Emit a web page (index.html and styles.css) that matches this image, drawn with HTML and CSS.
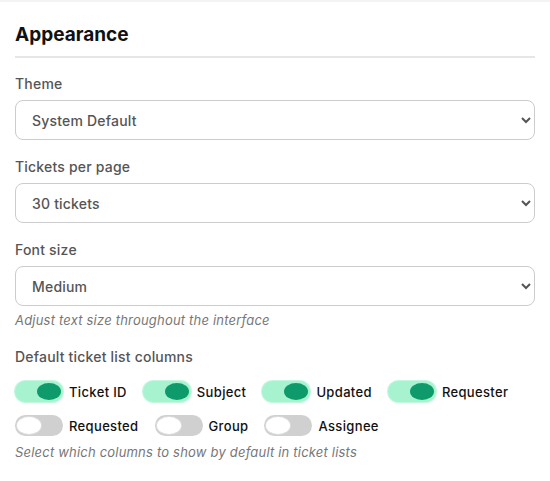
FILE: index.html
```html
<!DOCTYPE html>
<html lang="en">
<head>
    <meta charset="UTF-8">
    <meta name="viewport" content="width=device-width, initial-scale=1.0">
    <title>Appearance</title>
    <link rel="stylesheet" href="styles.css">
</head>
<body>
    <div class="section">
        <h2 class="section-title">Appearance</h2>

        <div class="field">
            <label for="theme">Theme</label>
            <select id="theme">
                <option>System Default</option>
                <option>Light</option>
                <option>Dark</option>
            </select>
        </div>

        <div class="field">
            <label for="perPage">Tickets per page</label>
            <select id="perPage">
                <option>10 tickets</option>
                <option>20 tickets</option>
                <option selected>30 tickets</option>
                <option>50 tickets</option>
            </select>
        </div>

        <div class="field">
            <label for="fontSize">Font size</label>
            <select id="fontSize">
                <option>Small</option>
                <option selected>Medium</option>
                <option>Large</option>
            </select>
            <p class="hint">Adjust text size throughout the interface</p>
        </div>

        <div class="field">
            <label>Default ticket list columns</label>
            <div class="toggles">
                <div class="toggle-item"><span class="toggle on"><span class="knob"></span></span>Ticket ID</div>
                <div class="toggle-item"><span class="toggle on"><span class="knob"></span></span>Subject</div>
                <div class="toggle-item"><span class="toggle on"><span class="knob"></span></span>Updated</div>
                <div class="toggle-item"><span class="toggle on"><span class="knob"></span></span>Requester</div>
                <div class="toggle-item"><span class="toggle"><span class="knob"></span></span>Requested</div>
                <div class="toggle-item"><span class="toggle"><span class="knob"></span></span>Group</div>
                <div class="toggle-item"><span class="toggle"><span class="knob"></span></span>Assignee</div>
            </div>
            <p class="hint hint-cols">Select which columns to show by default in ticket lists</p>
        </div>
    </div>
</body>
</html>
```

FILE: styles.css
```css
* {
    margin: 0;
    padding: 0;
    box-sizing: border-box;
}
body {
    background-color: #fff;
    font-family: Inter, "Open Sans", sans-serif;
    color: #111;
}
.section {
    border-top: 2px solid #f3f3f3;
    padding: 19px 15px 0 15px;
}
.section-title {
    font-size: 19px;
    font-weight: 700;
    line-height: 27px;
    padding-bottom: 8px;
    border-bottom: 2px solid #e6e6e6;
    margin-bottom: 15px;
}
.field {
    margin-bottom: 16px;
}
.field label {
    display: block;
    font-size: 14px;
    font-weight: 500;
    line-height: 21px;
    letter-spacing: 0.2px;
    color: #555;
    margin-bottom: 6px;
}
.field select {
    display: block;
    width: 100%;
    height: 40px;
    padding: 0 12px;
    font-family: inherit;
    font-size: 14px;
    font-weight: 500;
    letter-spacing: 0.2px;
    color: #555;
    background-color: #fff;
    border: 1px solid #ccc;
    border-radius: 8px;
}
.hint {
    margin-top: 4px;
    font-size: 13px;
    line-height: 20px;
    letter-spacing: 0.2px;
    font-style: italic;
    color: #777;
}
.hint-cols {
    margin-top: 6px;
}
.toggles {
    display: flex;
    flex-wrap: wrap;
    gap: 13px 16px;
    margin-top: 14px;
}
.toggle-item {
    display: flex;
    align-items: center;
    gap: 6px;
    font-size: 13px;
    font-weight: 500;
    letter-spacing: 0.35px;
    color: #111;
}
.toggle {
    display: flex;
    align-items: center;
    width: 48px;
    height: 21px;
    padding: 0 2px;
    border-radius: 11px;
    background-color: #d0d0d0;
}
.toggle .knob {
    width: 24px;
    height: 17px;
    border-radius: 50%;
    background-color: #fff;
    box-shadow: 0 0 0 1px #dcdcdc;
}
.toggle.on {
    justify-content: flex-end;
    background-color: #a7f3d0;
    box-shadow: 0 0 0 1px #c4f7e0;
}
.toggle.on .knob {
    background-color: #0f9a6c;
    box-shadow: none;
}
```
